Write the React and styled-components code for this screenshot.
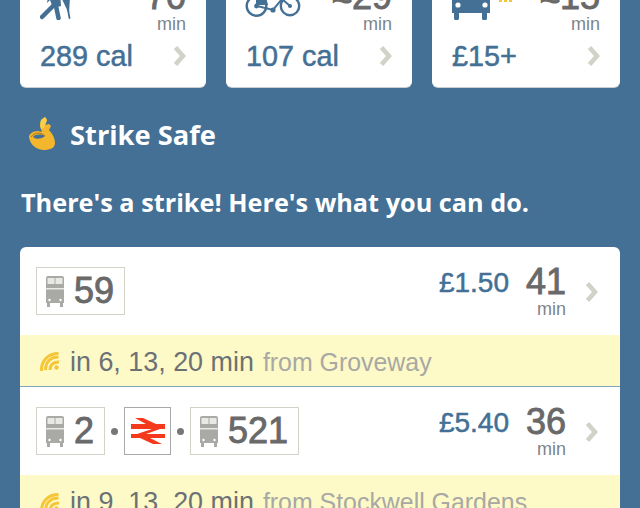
import React from 'react';
import styled, { createGlobalStyle } from 'styled-components';

const BLUE = '#437094';
const GREY = '#696969';
const SOFT = '#7d8489';
const LINE = '#d2d2c8';

const GlobalStyle = createGlobalStyle`
html, body {
    margin: 0;
    padding: 0;
    background: ${BLUE};
    font-family: "Liberation Sans", Arial, sans-serif;
}
`;

const Page = styled.div`
width: 640px;
height: 508px;
overflow: hidden;
background: ${BLUE};
padding: 0 20px;
box-sizing: border-box;
`;

const ModeRow = styled.div`
display: grid;
grid-template-columns: 186px 186px 188px;
column-gap: 20px;
margin-top: -33px;
`;

const ModeCard = styled.div`
height: 120px;
box-sizing: border-box;
padding: 0 20px 0;
background: #fff;
border-radius: 6px;
box-shadow: 0 1px 0 #c9ced2;
display: flex;
flex-direction: column;
`;

const ModeTop = styled.div`
height: 66px;
display: flex;
justify-content: space-between;
align-items: flex-end;
`;

const ModeIcon = styled.svg`
display: block;
flex: none;
margin-left: ${p => p.$left || 0}px;
margin-bottom: ${p => p.$bottom || 0}px;
`;

const ModeTime = styled.div`
display: flex;
flex-direction: column;
align-items: flex-end;
`;

const BigNum = styled.div`
font-size: 36px;
line-height: 36px;
color: ${GREY};
-webkit-text-stroke: 0.9px ${GREY};
`;

const Unit = styled.div`
font-size: 18px;
line-height: 18px;
color: ${SOFT};
`;

const ModeBottom = styled.div`
display: flex;
justify-content: space-between;
align-items: center;
margin-top: 7px;
`;

const Kcal = styled.div`
font-size: 28.8px;
line-height: 32px;
color: ${BLUE};
-webkit-text-stroke: 0.5px ${BLUE};
`;

const Heading = styled.div`
display: flex;
align-items: center;
gap: 12px;
margin-top: 29px;
padding-left: 8px;
height: 36px;
color: #fff;
font-family: "Open Sans", sans-serif;
font-weight: 700;
font-size: 27.3px;
`;

const SubHeading = styled.div`
margin-top: 33px;
margin-left: 1px;
color: #fff;
font-family: "Open Sans", sans-serif;
font-weight: 700;
font-size: 25.25px;
line-height: 34px;
white-space: nowrap;
`;

const RouteList = styled.div`
margin-top: 28px;
background: #fff;
border-radius: 6px 6px 0 0;
overflow: hidden;
`;

const RouteTop = styled.div`
height: 88px;
box-sizing: border-box;
padding: 20px 22px 0 16px;
display: flex;
justify-content: space-between;
align-items: flex-start;
`;

const Legs = styled.div`
display: flex;
align-items: center;
gap: 5px;
`;

const Chip = styled.div`
height: 48px;
box-sizing: border-box;
padding: 0 10px 0 9px;
border: 1px solid ${LINE};
display: flex;
align-items: center;
gap: 10px;
font-size: 36px;
color: ${GREY};
-webkit-text-stroke: 0.9px ${GREY};
`;

const RailChip = styled.div`
width: 47px;
height: 48px;
box-sizing: border-box;
border: 1px solid #a9a9a9;
display: flex;
align-items: center;
justify-content: center;
`;

const Dot = styled.span`
width: 7px;
height: 7px;
margin: 0 1px;
border-radius: 50%;
background: #777;
`;

const RouteRight = styled.div`
display: flex;
align-items: flex-start;
`;

const Price = styled.div`
font-size: 28px;
line-height: 32px;
color: ${BLUE};
-webkit-text-stroke: 0.5px ${BLUE};
`;

const RouteTime = styled.div`
width: 42px;
margin-left: 17px;
display: flex;
flex-direction: column;
margin-top: -3px;
`;

const RouteUnit = styled(Unit)`
margin-left: 11px;
`;

const Chevron = styled.svg`
display: block;
flex: none;
margin-left: ${p => p.$left || 0}px;
margin-top: ${p => p.$top || 0}px;
`;

const Live = styled.div`
height: 52px;
box-sizing: border-box;
padding: 3px 0 0 20px;
background: #fdfac8;
display: flex;
align-items: center;
gap: 10px;
font-size: 26.9px;
color: #6c7176;
white-space: nowrap;
border-bottom: ${p => p.$divider ? '1px solid #7fa5b8' : 'none'};
`;

const From = styled.span`
color: #a8a8a4;
font-size: 24.9px;
margin-left: 9px;
`;

const ChevronIcon = props => (
    <Chevron width="13" height="20" viewBox="0 0 13 20" {...props}>
        <path d="M2.500 1.500l7.500 8.500-7.500 8.500" fill="none" stroke={LINE} strokeWidth="4.600" />
    </Chevron>
);

const WalkIcon = () => (
    <ModeIcon width="32" height="40" viewBox="0 0 32 40" $bottom={13}>
        <circle cx="15" cy="6" r="4" fill={BLUE} />
        <path d="M9 12h11l1 14-8 2-3-8-3 3z" fill={BLUE} />
        <g fill="none" stroke={BLUE} strokeLinecap="round">
            <path d="M14 25L2 37" strokeWidth="4.500" />
            <path d="M16 26l2.500 12" strokeWidth="4.500" />
            <path d="M28 30l1.500 8" strokeWidth="1.800" />
        </g>
        <path d="M21 17l9-1-1 18z" fill={BLUE} />
    </ModeIcon>
);

const BikeIcon = () => (
    <ModeIcon width="56" height="30" viewBox="0 0 56 30" $left={-1} $bottom={16}>
        <g fill="none" stroke={BLUE} strokeWidth="2.400">
            <circle cx="11.500" cy="19" r="9.800" />
            <circle cx="45" cy="19" r="9.200" />
            <path d="M12 19l16 4 9-11 8 7" strokeWidth="2" />
        </g>
        <path d="M11 12c2-3 8-4 10-2l2 8-12 0z" fill={BLUE} />
        <circle cx="11.500" cy="19" r="2.400" fill={BLUE} />
        <circle cx="28" cy="23" r="2.600" fill={BLUE} />
        <circle cx="45" cy="19" r="2" fill={BLUE} />
    </ModeIcon>
);

const ModeBox = styled.div`
display: flex;
align-items: flex-start;
margin-bottom: 13px;
margin-left: -1px;
gap: 8px;
`;

const Surge = styled.div`
display: flex;
gap: 2px;
margin-top: 20px;

i {
    display: block;
    width: 3px;
    height: 2px;
    background: #f5c638;
}
`;

const CarIcon = () => (
    <ModeBox>
        <svg width="40" height="40" viewBox="0 0 40 40" style={{ display: 'block' }}>
            <path d="M1 17c0-4 2-6 5-6h28c3 0 5 2 5 6v16H1z" fill={BLUE} />
            <path d="M3 33h5v5a2.500 2.500 0 0 1-5 0zM31 33h5v5a2.500 2.500 0 0 1-5 0z" fill={BLUE} />
            <circle cx="7" cy="25" r="2.600" fill="#fff" />
            <circle cx="34" cy="25" r="2.600" fill="#fff" />
        </svg>
        <Surge>
            <i /><i /><i />
        </Surge>
    </ModeBox>
);

const OkHand = () => (
    <svg width="30" height="34" viewBox="0 0 30 34" style={{ display: 'block' }}>
        <path d="M13 3l4-3 2 3-2 5 4-1 2 2-2 4c4 4 6 9 6 13 0 5-5 7-11 7C9 33 2 28 1 20c0-3 4-6 9-6l4 1-2-6z" fill="#f4b62c" />
        <path d="M13 3l4-3 2 3-3 8-3 1c-1-3-1-6 0-9z" fill="#f9cf4a" />
        <path d="M5 20c2-3 8-3 12-1-3 3-9 4-12 1z" fill={BLUE} />
        <path d="M3 20c3-5 10-5 14-1" fill="none" stroke="#a8751a" strokeWidth="1" />
    </svg>
);

const BusIcon = () => (
    <svg width="18" height="31" viewBox="0 0 18 31" style={{ display: 'block', flex: 'none' }}>
        <path d="M2 0h14a2 2 0 0 1 2 2v25H0V2a2 2 0 0 1 2-2z" fill="#a9a9a5" />
        <rect x="1.500" y="2" width="7" height="6" fill="#e8e8e4" />
        <rect x="9.500" y="2" width="7" height="6" fill="#e8e8e4" />
        <rect x="0" y="12" width="18" height="1.500" fill="#e8e8e4" />
        <rect x="1" y="27" width="3" height="4" fill="#a9a9a5" />
        <rect x="14" y="27" width="3" height="4" fill="#a9a9a5" />
        <circle cx="3.500" cy="24" r="1.200" fill="#fff" />
        <circle cx="14.500" cy="24" r="1.200" fill="#fff" />
    </svg>
);

const RailIcon = () => (
    <svg width="34" height="26" viewBox="0 0 34 26" style={{ display: 'block' }}>
        <path fill="#f5391c" d="M0 6h34v5H0zM0 16h34v4H0zM4 0h8l13 6H15zM21 11h8L15 16H6zM9 20h10l12 6h-9z" />
    </svg>
);

const LiveIcon = () => (
    <svg width="20" height="20" viewBox="0 0 20 20" style={{ display: 'block', flex: 'none' }}>
        <circle cx="16.500" cy="15.500" r="2.200" fill="#f5c638" />
        <g fill="none" stroke="#f5c638" strokeWidth="3">
            <path d="M10 18c0-5 3-8 9-8" />
            <path d="M5.500 18c0-8 5-13 13-13" />
            <path d="M1.500 19C1 9 8 1.500 18.500 1.500" />
        </g>
    </svg>
);

const modes = [
    { icon: <WalkIcon />, time: '70', cost: '289 cal' },
    { icon: <BikeIcon />, time: '≈29', cost: '107 cal' },
    { icon: <CarIcon />, time: '≈15', cost: '£15+' },
];

const routes = [
    {
        legs: [{ number: '59' }],
        price: '£1.50',
        time: '41',
        live: 'in 6, 13, 20 min',
        from: 'from Groveway',
        divider: true,
    },
    {
        legs: [{ number: '2' }, { rail: true }, { number: '521' }],
        price: '£5.40',
        time: '36',
        live: 'in 9, 13, 20 min',
        from: 'from Stockwell Gardens',
    },
];

export default function App() {
    return (
        <Page>
            <GlobalStyle />
            <ModeRow>
                {modes.map(mode => (
                    <ModeCard key={mode.cost}>
                        <ModeTop>
                            {mode.icon}
                            <ModeTime>
                                <BigNum>{mode.time}</BigNum>
                                <Unit>min</Unit>
                            </ModeTime>
                        </ModeTop>
                        <ModeBottom>
                            <Kcal>{mode.cost}</Kcal>
                            <ChevronIcon />
                        </ModeBottom>
                    </ModeCard>
                ))}
            </ModeRow>
            <Heading>
                <OkHand />
                Strike Safe
            </Heading>
            <SubHeading>There's a strike! Here's what you can do.</SubHeading>
            <RouteList>
                {routes.map(route => (
                    <React.Fragment key={route.price}>
                        <RouteTop>
                            <Legs>
                                {route.legs.map((leg, i) => (
                                    <React.Fragment key={i}>
                                        {i > 0 && <Dot />}
                                        {leg.rail ? (
                                            <RailChip><RailIcon /></RailChip>
                                        ) : (
                                            <Chip>
                                                <BusIcon />
                                                {leg.number}
                                            </Chip>
                                        )}
                                    </React.Fragment>
                                ))}
                            </Legs>
                            <RouteRight>
                                <Price>{route.price}</Price>
                                <RouteTime>
                                    <BigNum>{route.time}</BigNum>
                                    <RouteUnit>min</RouteUnit>
                                </RouteTime>
                                <ChevronIcon $left={17} $top={15} />
                            </RouteRight>
                        </RouteTop>
                        <Live $divider={route.divider}>
                            <LiveIcon />
                            <span>
                                {route.live}
                                <From>{route.from}</From>
                            </span>
                        </Live>
                    </React.Fragment>
                ))}
            </RouteList>
        </Page>
    );
}
